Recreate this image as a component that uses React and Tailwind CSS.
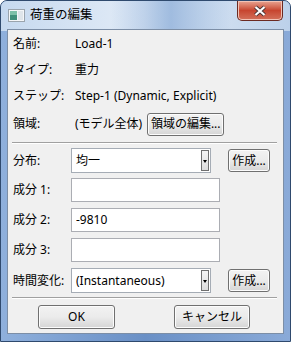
import React from "react";

const font = { fontFamily: '"Noto Sans", "Noto Sans CJK JP", sans-serif' };

function WinButton({ children, className = "" }) {
  return (
    <button
      className={
        "flex items-center justify-center rounded-[3px] border border-[#707070] bg-gradient-to-b from-[#f2f2f2] via-[#ebebeb] to-[#d5d5d5] text-[12px] text-black shadow-[inset_0_0_0_1px_#fcfcfc] " +
        className
      }
    >
      {children}
    </button>
  );
}

function Combo({ value }) {
  return (
    <div className="flex h-[25px] w-[140px] items-center border border-[#a5acb5] bg-white pl-[4px]">
      <span className="flex-1 text-[12px]">{value}</span>
      <div className="mr-[1px] flex h-[21px] w-[8px] flex-col items-center border border-[#6f6f6f] bg-gradient-to-b from-[#f4f4f4] to-[#dcdcdc] pt-[9px]">
        <div className="h-0 w-0 border-x-[2px] border-t-[3px] border-x-transparent border-t-black" />
      </div>
    </div>
  );
}

function Field({ value }) {
  return (
    <div className="flex h-[24px] w-[149px] items-center border border-[#abadb3] bg-white pl-[4px] text-[12px]">
      {value}
    </div>
  );
}

function Separator() {
  return (
    <div className="ml-[4px] mr-[6px] h-[2px] border-t border-b border-t-[#a0a0a0] border-b-white" />
  );
}

export default function App() {
  const info = [
    ["名前:", "Load-1"],
    ["タイプ:", "重力"],
    ["ステップ:", "Step-1 (Dynamic, Explicit)"],
  ];

  return (
    <div
      className="relative h-[342px] w-[291px] overflow-hidden rounded-t-[7px] border border-[#2f4a6e] bg-gradient-to-r from-[#8fb0dc] via-[#6a90c6] to-[#8aaad8]"
      style={font}
    >
      {/* title bar glass */}
      <div className="absolute inset-x-0 top-0 h-[30px] bg-gradient-to-r from-[#c6d9ef] via-[#e3ecf7] to-[#bcd1ea]" />
      <div className="absolute left-[110px] top-0 h-[30px] w-[120px] bg-gradient-to-r from-transparent via-[#86a9d6] to-transparent opacity-70" />

      <div className="relative flex h-[28px] items-center">
        <svg width="17" height="13" viewBox="0 0 17 13" className="ml-[7px] mt-[1px]">
          <rect x="0.5" y="0.5" width="16" height="12" fill="#f4f6f8" stroke="#9aa4ad" />
          <rect x="2" y="2" width="7" height="9" fill="#3f8f7a" />
          <rect x="2" y="2" width="7" height="4" fill="#7cc0a8" />
          <rect x="10" y="2" width="5" height="9" fill="#dfe5ea" />
        </svg>
        <span className="ml-[5px] text-[12.5px] text-black">荷重の編集</span>
      </div>

      {/* close button */}
      <div className="absolute right-[7px] top-0 flex h-[20px] w-[46px] items-center justify-center rounded-b-[5px] border border-t-0 border-[#6b2a22] bg-gradient-to-b from-[#e8a492] via-[#c7452f] to-[#d3705a] shadow-[inset_0_0_0_1px_#f2c3b6]">
        <svg width="14" height="12" viewBox="0 0 14 12">
          <path d="M2.5 2 L11.5 10 M11.5 2 L2.5 10" stroke="#4a3535" strokeWidth="4" strokeLinecap="butt" />
          <path d="M2.5 2 L11.5 10 M11.5 2 L2.5 10" stroke="#ffffff" strokeWidth="2.2" strokeLinecap="butt" />
        </svg>
      </div>

      {/* client area */}
      <div className="relative mx-[6px] h-[305px] border border-[#7c8ea6] bg-[#f0f0f0] text-[12px] text-black">
        <div className="flex flex-col pt-[1px]">
          {info.map(([label, value]) => (
            <div key={label} className="flex h-[26px] items-center pl-[5px]">
              <span className="w-[62px]">{label}</span>
              <span>{value}</span>
            </div>
          ))}
          <div className="flex h-[30px] items-center pl-[5px]">
            <span className="w-[62px]">領域:</span>
            <span>(モデル全体)</span>
            <WinButton className="ml-[5px] h-[23px] w-[77px]">領域の編集...</WinButton>
          </div>

          <div className="mt-[3px]">
            <Separator />
          </div>

          <div className="mt-[4px] flex items-center pl-[5px]">
            <span className="w-[58px]">分布:</span>
            <Combo value="均一" />
            <WinButton className="ml-[17px] h-[23px] w-[42px]">作成...</WinButton>
          </div>

          {[
            ["成分 1:", ""],
            ["成分 2:", "-9810"],
            ["成分 3:", ""],
          ].map(([label, value], i) => (
            <div
              key={label}
              className={"flex items-center pl-[5px] " + (i === 0 ? "mt-[5px]" : "mt-[6px]")}
            >
              <span className="w-[58px]">{label}</span>
              <Field value={value} />
            </div>
          ))}

          <div className="mt-[6px] flex items-center pl-[5px]">
            <span className="w-[58px]">時間変化:</span>
            <Combo value="(Instantaneous)" />
            <WinButton className="ml-[17px] h-[23px] w-[42px]">作成...</WinButton>
          </div>

          <div className="mt-[4px]">
            <Separator />
          </div>

          <div className="mt-[6px] flex">
            <WinButton className="ml-[30px] h-[24px] w-[77px]">OK</WinButton>
            <WinButton className="ml-[59px] h-[24px] w-[76px]">キャンセル</WinButton>
          </div>
        </div>
      </div>
    </div>
  );
}
